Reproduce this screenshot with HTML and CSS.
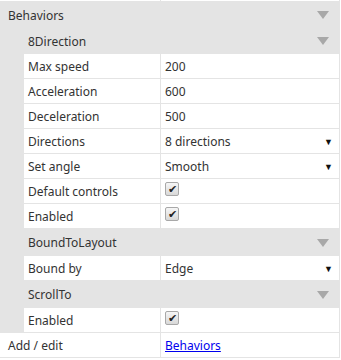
FILE: index.html
```html
<!DOCTYPE html>
<html lang="en">
<head>
    <meta charset="UTF-8">
    <title>Properties</title>
    <link rel="stylesheet" href="styles.css">
</head>
<body>
    <div class="props">
        <div class="row top-strip"><div class="name"></div><div class="value"></div></div>

        <div class="group first">Behaviors <span class="fold"></span></div>

        <div class="group sub first">8Direction <span class="fold"></span></div>
        <div class="row nested"><div class="name">Max speed</div><div class="value">200</div></div>
        <div class="row nested"><div class="name">Acceleration</div><div class="value">600</div></div>
        <div class="row nested"><div class="name">Deceleration</div><div class="value">500</div></div>
        <div class="row nested"><div class="name">Directions</div><div class="value select">8 directions<span class="drop">&#9660;</span></div></div>
        <div class="row nested"><div class="name">Set angle</div><div class="value select">Smooth<span class="drop">&#9660;</span></div></div>
        <div class="row nested"><div class="name">Default controls</div><div class="value"><span class="check">&#10004;</span></div></div>
        <div class="row nested"><div class="name">Enabled</div><div class="value"><span class="check">&#10004;</span></div></div>

        <div class="group sub">BoundToLayout <span class="fold"></span></div>
        <div class="row nested"><div class="name">Bound by</div><div class="value select">Edge<span class="drop">&#9660;</span></div></div>

        <div class="group sub">ScrollTo <span class="fold"></span></div>
        <div class="row nested"><div class="name">Enabled</div><div class="value"><span class="check">&#10004;</span></div></div>

        <div class="row"><div class="name">Add / edit</div><div class="value"><a href="#">Behaviors</a></div></div>
    </div>
</body>
</html>
```

FILE: styles.css
```css
body {
    margin: 0;
    background: #fff;
    font-family: "Noto Sans", "Open Sans", sans-serif;
    font-size: 12px;
    color: #333;
}
.props {
    width: 339px;
    border-right: 1px solid #e4e4e4;
}
.row {
    display: grid;
    grid-template-columns: 161px 1fr;
    height: 24px;
    border-bottom: 1px solid #e4e4e4;
    background: #fff;
}
.row.nested {
    grid-template-columns: 24px 137px 1fr;
    background: linear-gradient(to right, #e4e4e4 24px, #fff 24px);
}
.row.nested::before {
    content: "";
}
.row.top-strip {
    height: 1px;
}
.name {
    display: flex;
    align-items: center;
    padding-left: 8px;
    padding-top: 1px;
    border-right: 1px solid #e4e4e4;
    white-space: nowrap;
}
.nested .name {
    padding-left: 4px;
}
.value {
    display: flex;
    align-items: center;
    padding-left: 4px;
    padding-right: 6px;
    padding-top: 1px;
}
.value.select {
    justify-content: space-between;
}
.drop {
    font-size: 9px;
    color: #111;
}
.value a {
    color: #0000ee;
}
.check {
    display: inline-flex;
    align-items: center;
    justify-content: center;
    width: 12px;
    height: 12px;
    border: 1px solid #a8a8a8;
    border-radius: 2px;
    background: linear-gradient(#f6f6f6, #d8d8d8);
    font-size: 11px;
    line-height: 1;
    color: #222;
    margin-top: -6px;
}
.group {
    display: flex;
    align-items: center;
    justify-content: space-between;
    height: 27px;
    padding: 0 10px 0 8px;
    background: #e4e4e4;
    color: #333;
}
.group.first {
    height: 26px;
}
.group.sub {
    padding-left: 28px;
}
.fold {
    width: 0;
    height: 0;
    border-left: 6px solid transparent;
    border-right: 6px solid transparent;
    border-top: 8px solid #a8a8a8;
}
```
